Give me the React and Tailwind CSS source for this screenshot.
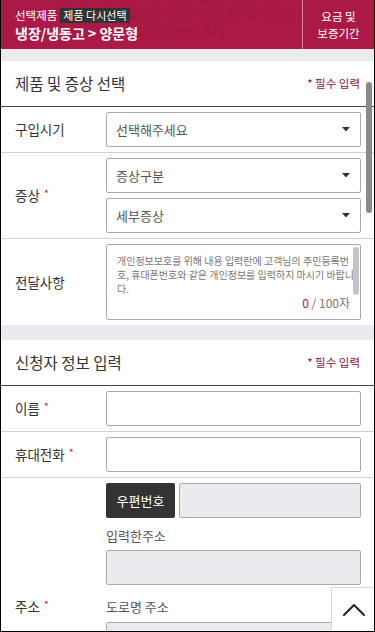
import { ChevronUp } from "lucide-react";

const CRIMSON = "#ab1a46";

function Caret() {
  return (
    <svg width="8" height="5" viewBox="0 0 8 5" className="shrink-0">
      <path d="M0 0 H8 L4 4.5 Z" fill="#333" />
    </svg>
  );
}

function Select({ label }) {
  return (
    <div className="h-[35px] border border-[#aaa] rounded-[2px] bg-white flex items-center justify-between pl-[9px] pr-[10px]">
      <span className="text-[13px] text-[#555]">{label}</span>
      <Caret />
    </div>
  );
}

function Field({ gray }) {
  return (
    <div
      className={`h-[35px] border border-[#aaa] rounded-[2px] ${
        gray ? "bg-[#e9ebef]" : "bg-white"
      }`}
    />
  );
}

function Req() {
  return <span className="text-[#b8325b] text-[11px] ml-[4px] align-top">*</span>;
}

function Row({ label, children, last }) {
  return (
    <div className={`flex ${last ? "" : "border-b border-[#cfcfcf]"}`}>
      <div className="w-[105px] pl-[14px] flex items-center text-[13.5px] text-[#333]">
        {label}
      </div>
      <div className="flex-1 pr-[13px] py-[5px] flex flex-col gap-[5px]">
        {children}
      </div>
    </div>
  );
}

function SectionHead({ title }) {
  return (
    <div className="h-[46px] flex items-center justify-between pl-[14px] pr-[14px] border-b border-[#444]">
      <h2 className="text-[15.5px] text-[#333]">{title}</h2>
      <span className="text-[11.5px] text-[#8c1237]">* 필수 입력</span>
    </div>
  );
}

export default function App() {
  return (
    <div className="relative w-[375px] h-[632px] overflow-hidden border-x border-b border-black bg-[#e9ebef] font-['Noto_Sans_CJK_KR',sans-serif]">
      {/* header, content scrolled under it shows faintly */}
      <div className="relative h-[49px] flex" style={{ backgroundColor: CRIMSON }}>
        <div className="absolute left-0 top-0 w-[301px] h-[49px] overflow-hidden">
          <p className="absolute left-[52px] top-[-11px] text-[11px] leading-[17px] text-[#9a1741] whitespace-nowrap">
            보증기간 이후 정상적인 사용 중 발생한 고장은 유상
          </p>
          <p className="absolute left-[127px] top-[6px] text-[11px] leading-[17px] text-[#9a1741] whitespace-nowrap">
            상으로 서비스 비용이 청구됩니다. (자세한 내용은
          </p>
          <p className="absolute left-[133px] top-[23px] text-[11px] leading-[17px] text-[#9a1741] whitespace-nowrap">
            조하시기 바랍니다.)
          </p>
        </div>
        <div className="relative flex-1 pl-[14px] pt-[7px]">
          <div className="flex items-center gap-[3px]">
            <span className="text-[11.5px] text-white leading-[16px]">선택제품</span>
            <span className="bg-[#333] text-white text-[11px] leading-[15px] px-[3px]">
              제품 다시선택
            </span>
          </div>
          <div className="mt-[1px] text-[14px] font-bold text-white leading-[19px]">
            냉장/냉동고 &gt; 양문형
          </div>
        </div>
        <div className="relative w-[72px] border-l border-[#d9849d] flex flex-col items-center justify-center text-white text-[11.5px] leading-[17px]">
          <span>요금 및</span>
          <span>보증기간</span>
        </div>
      </div>

      <div className="h-[12px]" />

      {/* section 1 */}
      <div className="bg-white">
        <SectionHead title="제품 및 증상 선택" />
        <Row label="구입시기">
          <Select label="선택해주세요" />
        </Row>
        <Row
          label={
            <span>
              증상
              <Req />
            </span>
          }
        >
          <Select label="증상구분" />
          <Select label="세부증상" />
        </Row>
        <Row label="전달사항" last>
          <div className="relative h-[76px] border border-[#aaa] rounded-[2px] pl-[10px] pt-[9px]">
            <div className="text-[10px] leading-[14px] text-[#777] whitespace-nowrap">
              <p>개인정보보호를 위해 내용 입력란에 고객님의 주민등록번</p>
              <p>호, 휴대폰번호와 같은 개인정보를 입력하지 마시기 바랍니</p>
              <p>다.</p>
            </div>
            <div className="absolute right-[10px] bottom-[7px] text-[12px] text-[#777]">
              <span className="text-[#ab1a46]">0</span> / 100자
            </div>
            <div className="absolute right-[1px] top-[2px] w-[6px] h-[48px] rounded-full bg-[#c4c4c4]" />
          </div>
        </Row>
      </div>

      <div className="h-[15px]" />

      {/* section 2 */}
      <div className="bg-white">
        <SectionHead title="신청자 정보 입력" />
        <Row
          label={
            <span>
              이름
              <Req />
            </span>
          }
        >
          <Field />
        </Row>
        <Row
          label={
            <span>
              휴대전화
              <Req />
            </span>
          }
        >
          <Field />
        </Row>
        <Row
          label={
            <span>
              주소
              <Req />
            </span>
          }
          last
        >
          <div className="flex gap-[4px]">
            <button className="w-[69px] h-[35px] bg-[#333] text-white text-[13px] rounded-[2px] shrink-0">
              우편번호
            </button>
            <div className="flex-1">
              <Field gray />
            </div>
          </div>
          <div className="text-[13px] text-[#555] leading-[20px] mt-[3px]">입력한주소</div>
          <div className="-mt-[1px]">
            <Field gray />
          </div>
          <div className="text-[13px] text-[#555] leading-[20px] mt-[7px]">도로명 주소</div>
          <Field gray />
          <div className="text-[13px] text-[#555] leading-[20px] mt-[7px]">상세 주소</div>
          <Field />
        </Row>
      </div>

      {/* page scrollbar */}
      <div className="absolute right-[2px] top-[82px] w-[6px] h-[131px] rounded-full bg-[#8a8a8a]" />

      {/* top button */}
      <button className="absolute left-[330px] top-[587px] w-[46px] h-[46px] bg-white border border-[#d5d5d5] flex items-center justify-center">
        <ChevronUp size={40} strokeWidth={1.2} color="#222" />
      </button>
    </div>
  );
}
